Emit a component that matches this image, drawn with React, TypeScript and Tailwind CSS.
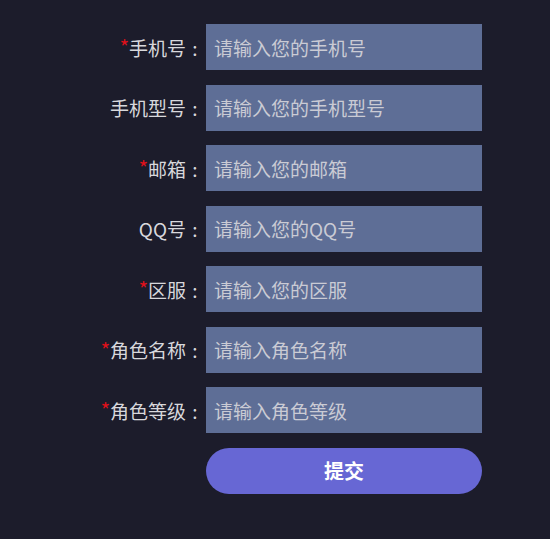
import React from "react";

const fields = [
  { label: "手机号", required: true, ph: "请输入您的手机号" },
  { label: "手机型号", required: false, ph: "请输入您的手机型号" },
  { label: "邮箱", required: true, ph: "请输入您的邮箱" },
  { label: "QQ号", required: false, ph: "请输入您的QQ号" },
  { label: "区服", required: true, ph: "请输入您的区服" },
  { label: "角色名称", required: true, ph: "请输入角色名称" },
  { label: "角色等级", required: true, ph: "请输入角色等级" },
];

export default function App() {
  return (
    <div
      className="w-[550px] h-[539px] bg-[#1c1c2b] overflow-hidden"
      style={{ fontFamily: '"Noto Sans CJK SC", "Noto Sans", sans-serif' }}
    >
      <div className="flex flex-col gap-[14.5px] pt-[24px]">
        {fields.map((f) => (
          <div key={f.label} className="flex items-center h-[46px]">
            <label className="w-[206px] flex justify-end items-center text-[19px] text-[#d8d8dc] pr-[2px] leading-none">
              {f.required && <span className="text-[#e0101a] text-[20px]">*</span>}
              <span>{f.label}</span>
              <span className="inline-block w-[18px] text-center">:</span>
            </label>
            <input
              className="w-[276px] h-[46px] bg-[#5e6e96] px-[8px] text-[19px] text-white placeholder:text-[#cacbd4] outline-none"
              placeholder={f.ph}
            />
          </div>
        ))}
        <div className="flex">
          <div className="w-[206px]" />
          <button className="w-[276px] h-[46px] rounded-full bg-[#6767d4] text-white text-[20px] font-bold">
            提交
          </button>
        </div>
      </div>
    </div>
  );
}
